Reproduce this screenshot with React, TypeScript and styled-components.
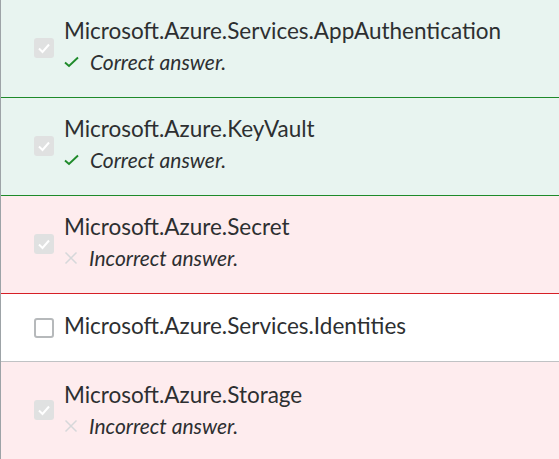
import styled, { createGlobalStyle } from "styled-components"

const GlobalStyle = createGlobalStyle`
    html, body {
        margin: 0;
        padding: 0;
        background: #ffffff;
    }

    body {
        font-family: Lato, "Noto Sans", sans-serif;
        color: #2d2f31;
    }
`;

type Status = "correct" | "incorrect" | "none"

interface Answer {
    label: string
    checked: boolean
    status: Status
}

const answers: Answer[] = [
    { label: "Microsoft.Azure.Services.AppAuthentication", checked: true, status: "correct" },
    { label: "Microsoft.Azure.KeyVault", checked: true, status: "correct" },
    { label: "Microsoft.Azure.Secret", checked: true, status: "incorrect" },
    { label: "Microsoft.Azure.Services.Identities", checked: false, status: "none" },
    { label: "Microsoft.Azure.Storage", checked: true, status: "incorrect" },
];

const List = styled.div`
    width: 100%;
    min-height: 459px;
    border-left: 1px solid #9da3a7;
    box-sizing: border-box;
    display: flex;
    flex-direction: column;
`;

const Row = styled.div<{ status: Status; last?: boolean }>`
    display: flex;
    align-items: center;
    gap: 10px;
    padding: ${props => props.status === "none" ? "17px 16px 20px 33px" : "16px 16px 21px 33px"};
    min-height: ${props => props.status === "none" ? "67px" : "97px"};
    box-sizing: border-box;
    background-color: ${props =>
        props.status === "correct" ? '#e8f4f0' :
        props.status === "incorrect" ? '#feecee' : '#ffffff'};
    border-bottom: 1px solid ${props =>
        props.status === "correct" ? '#1e8a2a' :
        props.status === "incorrect" ? '#d61f26' : '#c0c2c4'};
    ${props => props.last ? 'border-bottom: none; flex: 1; align-items: flex-start; padding-top: 18px;' : ''}
`;

const Box = styled.span<{ checked: boolean }>`
    flex: none;
    width: 20px;
    height: 20px;
    margin-top: 4px;
    box-sizing: border-box;
    border-radius: 3px;
    display: flex;
    align-items: center;
    justify-content: center;
    background-color: ${props => props.checked ? '#e0e1e1' : '#ffffff'};
    border: ${props => props.checked ? 'none' : '2px solid #b6b9bb'};
`;

const LastBox = styled(Box)`
    margin-top: 20px;
`;

const Content = styled.div`
    display: flex;
    flex-direction: column;
`;

const Label = styled.div`
    font-size: 22.5px;
    line-height: 30px;
    color: #2d2f31;
`;

const Feedback = styled.div`
    display: flex;
    align-items: center;
    gap: 11px;
    margin-top: 2px;
    font-size: 21px;
    font-style: italic;
    line-height: 28px;
    color: #2d2f31;
`;

const CheckMark = () => (
    <svg width="15" height="14" viewBox="0 0 15 14">
        <path d="M1 7.5 L5 11 L14 2.5" fill="none" stroke="#1e8a2a" strokeWidth="1.9" />
    </svg>
)

const CrossMark = () => (
    <svg width="14" height="14" viewBox="0 0 14 14">
        <path d="M1.5 1.5 L12.5 12.5 M12.5 1.5 L1.5 12.5" fill="none" stroke="#d6d8da" strokeWidth="1.5" />
    </svg>
)

const BoxTick = () => (
    <svg width="14" height="14" viewBox="0 0 14 14">
        <path d="M2 7.5 L5.5 11 L12 3.5" fill="none" stroke="#ffffff" strokeWidth="2" />
    </svg>
)

const App = () => {
    return (
        <>
            <GlobalStyle />
            <List>
                {answers.map((a, i) => {
                    const last = i === answers.length - 1
                    const BoxPart = last ? LastBox : Box
                    return (
                        <Row key={a.label} status={a.status} last={last}>
                            <BoxPart checked={a.checked}>
                                {a.checked && <BoxTick />}
                            </BoxPart>
                            <Content>
                                <Label>{a.label}</Label>
                                {a.status === "correct" && (
                                    <Feedback>
                                        <CheckMark />
                                        Correct answer.
                                    </Feedback>
                                )}
                                {a.status === "incorrect" && (
                                    <Feedback>
                                        <CrossMark />
                                        Incorrect answer.
                                    </Feedback>
                                )}
                            </Content>
                        </Row>
                    )
                })}
            </List>
        </>
    )
}

export default App;
